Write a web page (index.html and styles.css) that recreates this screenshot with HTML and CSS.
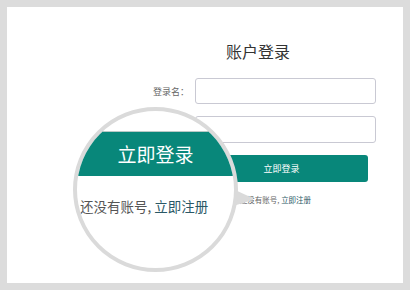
FILE: index.html
```html
<!DOCTYPE html>
<html lang="zh-CN">
<head>
  <meta charset="UTF-8">
  <title>账户登录</title>
  <link rel="stylesheet" href="styles.css">
</head>
<body>
  <div class="panel">
    <div class="login">
      <h2 class="title">账户登录</h2>
      <div class="row">
        <label class="label">登录名：</label>
        <input class="field" type="text">
      </div>
      <div class="row">
        <label class="label"></label>
        <input class="field field-tall" type="password">
      </div>
      <div class="row">
        <span class="label"></span>
        <button class="btn">立即登录</button>
      </div>
      <div class="row row-hint">
        <span class="label"></span>
        <p class="hint">还没有账号, <a href="#">立即注册</a></p>
      </div>
    </div>

    <!-- magnifier over the button -->
    <div class="tail"></div>
    <div class="lens">
      <div class="lens-btn">立即登录</div>
      <p class="lens-hint">还没有账号, <a href="#">立即注册</a></p>
    </div>
  </div>
</body>
</html>
```

FILE: styles.css
```css
body {
  margin: 0;
  padding: 7px;
  background: #dcdcdc;
  font-family: "Noto Sans CJK SC", "Liberation Sans", sans-serif;
}

.panel {
  position: relative;
  width: 396px;
  height: 276px;
  background: #fff;
  overflow: hidden;
}

.login {
  margin-left: 133px;
  width: 236px;
  padding-top: 31px;
}

.title {
  margin: 0 0 14px;
  text-align: center;
  font-size: 16px;
  font-weight: normal;
  color: #333;
  line-height: 26px;
}

.row {
  display: flex;
  align-items: center;
  margin-bottom: 12px;
}

.label {
  width: 49px;
  flex: none;
  padding-right: 6px;
  text-align: right;
  font-size: 9px;
  color: #666;
}

.field {
  box-sizing: border-box;
  width: 181px;
  height: 26px;
  border: 1px solid #c9c9d3;
  border-radius: 3px;
  margin: 0;
}

.field-tall {
  height: 27px;
}

.btn {
  width: 173px;
  height: 27px;
  border: none;
  border-radius: 3px;
  background: #08877a;
  color: #fff;
  font-family: inherit;
  font-size: 9px;
  padding: 0;
}

.row-hint {
  margin-top: 13px;
}

.hint {
  width: 173px;
  margin: 0;
  padding-right: 12px;
  box-sizing: border-box;
  text-align: center;
  font-size: 7.5px;
  line-height: 10px;
  color: #666;
}

.hint a, .lens-hint a {
  color: #2a5866;
  text-decoration: none;
}

.tail {
  position: absolute;
  left: 226px;
  top: 182px;
  width: 20px;
  height: 17px;
  background: #dadada;
  clip-path: polygon(0 0, 100% 55%, 100% 65%, 0 100%);
}

.lens {
  position: absolute;
  left: 66px;
  top: 100px;
  box-sizing: border-box;
  width: 165px;
  height: 165px;
  border: 4px solid #dadada;
  border-radius: 50%;
  background: #fff;
  overflow: hidden;
}

.lens-btn {
  margin-top: 20px;
  height: 45px;
  box-sizing: border-box;
  border-top: 1px solid #b9c9c6;
  background: #08877a;
  color: #fff;
  font-size: 19px;
  line-height: 44px;
  text-align: center;
}

.lens-hint {
  margin: 20px 0 0;
  padding-left: 3px;
  font-size: 13.5px;
  line-height: 20px;
  color: #555;
  white-space: nowrap;
}
```
